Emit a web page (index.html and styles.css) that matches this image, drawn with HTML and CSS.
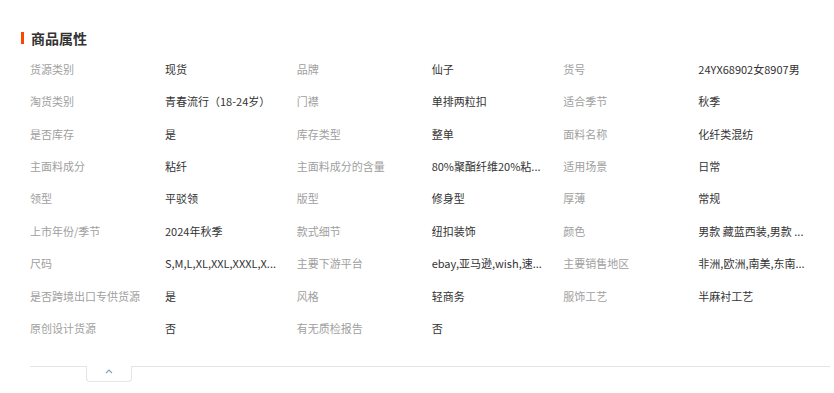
FILE: index.html
```html
<!DOCTYPE html>
<html lang="zh-CN">
<head>
<meta charset="utf-8">
<title>商品属性</title>
<link rel="stylesheet" href="styles.css">
</head>
<body>
<section class="attrs">
  <h3 class="attrs-title">商品属性</h3>
  <div class="attrs-grid">
    <div class="attr"><span class="attr-label">货源类别</span><span class="attr-value">现货</span></div>
    <div class="attr"><span class="attr-label">品牌</span><span class="attr-value">仙子</span></div>
    <div class="attr"><span class="attr-label">货号</span><span class="attr-value">24YX68902女8907男</span></div>
    <div class="attr"><span class="attr-label">淘货类别</span><span class="attr-value">青春流行（18-24岁）</span></div>
    <div class="attr"><span class="attr-label">门襟</span><span class="attr-value">单排两粒扣</span></div>
    <div class="attr"><span class="attr-label">适合季节</span><span class="attr-value">秋季</span></div>
    <div class="attr"><span class="attr-label">是否库存</span><span class="attr-value">是</span></div>
    <div class="attr"><span class="attr-label">库存类型</span><span class="attr-value">整单</span></div>
    <div class="attr"><span class="attr-label">面料名称</span><span class="attr-value">化纤类混纺</span></div>
    <div class="attr"><span class="attr-label">主面料成分</span><span class="attr-value">粘纤</span></div>
    <div class="attr"><span class="attr-label">主面料成分的含量</span><span class="attr-value" title="80%聚酯纤维20%粘纤">80%聚酯纤维20%粘...</span></div>
    <div class="attr"><span class="attr-label">适用场景</span><span class="attr-value">日常</span></div>
    <div class="attr"><span class="attr-label">领型</span><span class="attr-value">平驳领</span></div>
    <div class="attr"><span class="attr-label">版型</span><span class="attr-value">修身型</span></div>
    <div class="attr"><span class="attr-label">厚薄</span><span class="attr-value">常规</span></div>
    <div class="attr"><span class="attr-label">上市年份/季节</span><span class="attr-value">2024年秋季</span></div>
    <div class="attr"><span class="attr-label">款式细节</span><span class="attr-value">纽扣装饰</span></div>
    <div class="attr"><span class="attr-label">颜色</span><span class="attr-value">男款 藏蓝西装,男款 ...</span></div>
    <div class="attr"><span class="attr-label">尺码</span><span class="attr-value">S,M,L,XL,XXL,XXXL,X...</span></div>
    <div class="attr"><span class="attr-label">主要下游平台</span><span class="attr-value">ebay,亚马逊,wish,速...</span></div>
    <div class="attr"><span class="attr-label">主要销售地区</span><span class="attr-value">非洲,欧洲,南美,东南...</span></div>
    <div class="attr"><span class="attr-label">是否跨境出口专供货源</span><span class="attr-value">是</span></div>
    <div class="attr"><span class="attr-label">风格</span><span class="attr-value">轻商务</span></div>
    <div class="attr"><span class="attr-label">服饰工艺</span><span class="attr-value">半麻衬工艺</span></div>
    <div class="attr"><span class="attr-label">原创设计货源</span><span class="attr-value">否</span></div>
    <div class="attr"><span class="attr-label">有无质检报告</span><span class="attr-value">否</span></div>
  </div>
  <div class="attrs-footer">
    <button class="attrs-toggle" type="button" aria-label="收起">
      <svg class="caret" width="8" height="5" viewBox="0 0 8 5"><path d="M1 4.2 L4 1.2 L7 4.2" fill="none" stroke="#8a9bb0" stroke-width="1.2"/></svg>
    </button>
  </div>
</section>
</body>
</html>
```

FILE: styles.css
```css
html, body {
  margin: 0;
  padding: 0;
  background: #fff;
}

body {
  font-family: "Noto Sans CJK SC", "Noto Sans", sans-serif;
  font-size: 11px;
  color: #333;
}

.attrs {
  width: 800px;
  padding: 30px 0 0 30px;
}

.attrs-title {
  margin: 0 0 0 -9px;
  display: flex;
  align-items: center;
  gap: 7px;
  font-size: 14px;
  line-height: 16px;
  font-weight: bold;
  color: #333;
}

.attrs-title::before {
  content: "";
  width: 3px;
  height: 12px;
  background: #ff4400;
}

.attrs-grid {
  margin-top: 6.8px;
  display: grid;
  grid-template-columns: repeat(3, 1fr);
  grid-auto-rows: 32.375px;
  align-items: center;
}

.attr {
  display: flex;
  align-items: center;
  line-height: 16px;
  white-space: nowrap;
}

.attr-label {
  flex: 0 0 135px;
  color: #a0a0a0;
}

.attr-value {
  color: #333;
}

.attrs-footer {
  margin-top: 21.8px;
  border-top: 1px solid #e5e5e5;
  height: 20px;
}

.attrs-toggle {
  display: flex;
  justify-content: center;
  align-items: flex-start;
  margin: -1px 0 0 56px;
  width: 46px;
  height: 16px;
  padding: 3px 0 0;
  background: #fff;
  border: 1px solid #e5e5e5;
  border-top: none;
  border-radius: 0 0 4px 4px;
  cursor: pointer;
}

.caret {
  display: block;
}
```
